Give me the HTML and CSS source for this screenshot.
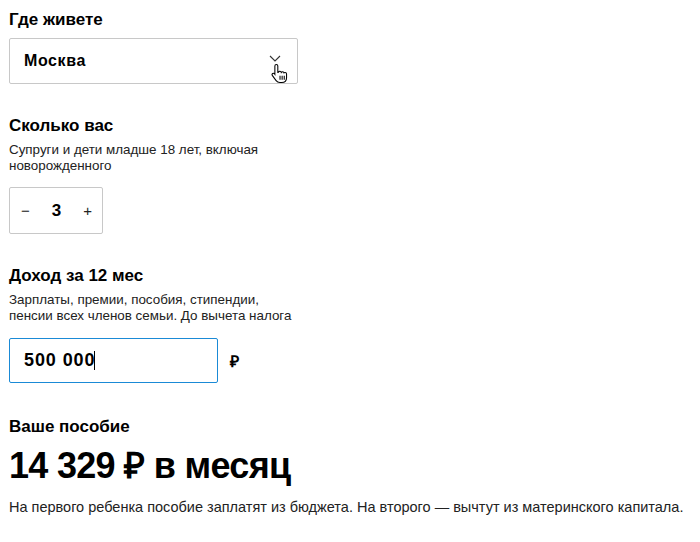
FILE: index.html
```html
<!DOCTYPE html>
<html lang="ru">
<head>
    <meta charset="UTF-8">
    <title>Калькулятор пособия</title>
    <link rel="stylesheet" href="styles.css">
</head>
<body>
    <div class="calc">
        <div class="field">
            <div class="field-title">Где живете</div>
            <div class="select">
                <span class="select-value">Москва</span>
                <span class="select-arrow">
                    <svg width="12" height="7" viewBox="0 0 12 7"><path d="M1 1l5 5 5-5" fill="none" stroke="#333" stroke-width="1.1"/></svg>
                    <!-- mouse pointer over the arrow -->
                    <svg class="pointer" width="17" height="20" viewBox="0 0 16 19">
                        <path d="M5 1.5c.8 0 1.4.6 1.4 1.4v6l.6-.1c.2-.6.8-1 1.4-1s1.2.5 1.3 1.1c.3-.4.8-.6 1.3-.6.7 0 1.2.5 1.3 1.1.3-.2.6-.3 1-.3.8 0 1.4.6 1.4 1.4v3.5c0 2.6-1.9 4.5-4.6 4.5H8.3c-1.5 0-2.6-.6-3.5-1.8L1.3 12c-.5-.6-.4-1.5.2-2 .6-.4 1.4-.3 1.9.3l.2.3V2.9c0-.8.6-1.4 1.4-1.4z" fill="#fff" stroke="#000" stroke-width="1"/>
                        <path d="M8.5 12v4M10.5 12v4M12.5 12v4" stroke="#000" stroke-width="1"/>
                    </svg>
                </span>
            </div>
        </div>

        <div class="field">
            <div class="field-title">Сколько вас</div>
            <div class="field-hint">Супруги и дети младше 18 лет, включая<br>новорожденного</div>
            <div class="stepper">
                <span class="stepper-btn">−</span>
                <span class="stepper-value">3</span>
                <span class="stepper-btn">+</span>
            </div>
        </div>

        <div class="field">
            <div class="field-title">Доход за 12 мес</div>
            <div class="field-hint">Зарплаты, премии, пособия, стипендии,<br>пенсии всех членов семьи. До вычета налога</div>
            <div class="money">
                <div class="input">500 000<span class="caret"></span></div>
                <span class="currency">₽</span>
            </div>
        </div>

        <div class="result">
            <div class="field-title">Ваше пособие</div>
            <div class="result-sum">14 329 ₽ в месяц</div>
            <div class="result-note">На первого ребенка пособие заплатят из бюджета. На второго — вычтут из материнского капитала.</div>
        </div>
    </div>
</body>
</html>
```

FILE: styles.css
```css
body, html {
    margin: 0;
    padding: 0;
    background: #fff;
    color: #000;
    font-family: 'Liberation Sans', Arial, sans-serif;
}

.calc {
    padding: 9px 9px 0 9px;
}

.field {
    margin-bottom: 31px;
}

.field-title {
    font-size: 17px;
    line-height: 22px;
    font-weight: bold;
}

.field-hint {
    font-size: 13.4px;
    line-height: 16px;
    margin-top: 5px;
    color: #222;
}

/* City select */
.select {
    margin-top: 7px;
    width: 289px;
    height: 46px;
    box-sizing: border-box;
    border: 1px solid #c8c8c8;
    border-radius: 2px;
    display: flex;
    align-items: center;
    justify-content: space-between;
    padding: 0 16px 0 14px;
}

.select-value {
    font-size: 16px;
    font-weight: bold;
    letter-spacing: 0.6px;
}

.select-arrow {
    position: relative;
    display: flex;
    margin-top: -6px;
}

.pointer {
    position: absolute;
    left: 2px;
    top: 8px;
}

/* Counter */
.stepper {
    margin-top: 13px;
    width: 94px;
    height: 47px;
    box-sizing: border-box;
    border: 1px solid #c8c8c8;
    border-radius: 2px;
    display: flex;
    align-items: center;
    justify-content: space-between;
    padding: 0 10px 0 11px;
}

.stepper-btn {
    font-size: 15px;
    color: #222;
}

.stepper-value {
    font-size: 17px;
    font-weight: bold;
}

/* Income */
.money {
    margin-top: 14px;
    display: flex;
    align-items: center;
    gap: 12px;
}

.input {
    width: 209px;
    height: 45px;
    box-sizing: border-box;
    border: 1px solid #1a8ad6;
    border-radius: 2px;
    display: flex;
    align-items: center;
    padding-left: 14px;
    font-size: 18px;
    font-weight: bold;
    letter-spacing: 0.9px;
}

.caret {
    display: inline-block;
    width: 1px;
    height: 19px;
    background: #000;
    margin-left: -1px;
}

.currency {
    font-size: 16px;
    font-weight: bold;
}

/* Result */
.result {
    padding-top: 2px;
}

.result-sum {
    font-size: 36px;
    line-height: 40px;
    font-weight: bold;
    letter-spacing: -0.7px;
    margin-top: 8px;
}

.result-note {
    font-size: 14.5px;
    line-height: 20px;
    margin-top: 11px;
    color: #222;
}
```
